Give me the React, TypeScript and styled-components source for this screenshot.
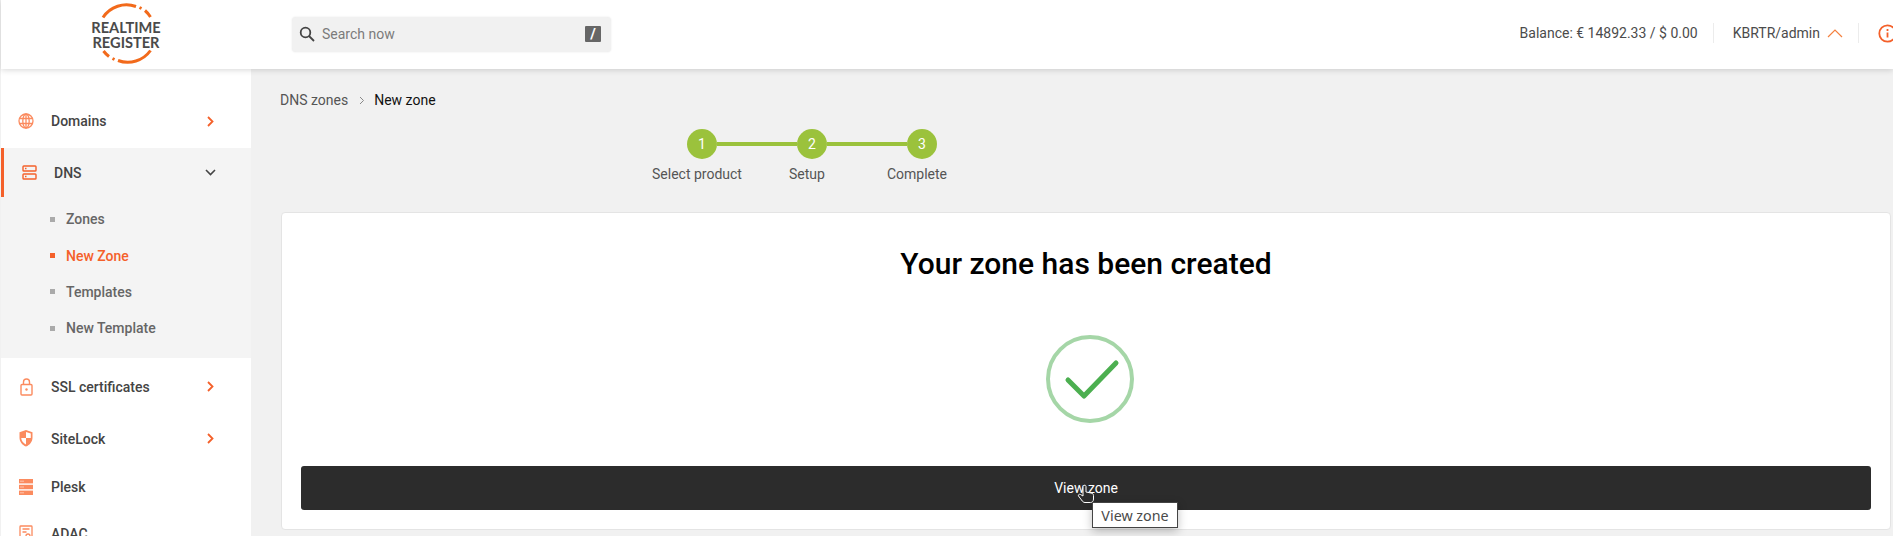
import React from "react";
import styled, { createGlobalStyle } from "styled-components";

const Global = createGlobalStyle`
  html, body { margin: 0; padding: 0; background: #f1f1f1; overflow: hidden; }
  body { font-family: Roboto, "Liberation Sans", sans-serif; font-size: 14px; color: #444; }
  * { box-sizing: border-box; }
`;

const Page = styled.div`
  width: 1893px;
  height: 536px;
  overflow: hidden;
  display: flex;
  flex-direction: column;
  background: #f1f1f1;
`;

const Header = styled.header`
  position: relative;
  z-index: 2;
  flex: none;
  height: 69px;
  margin-left: 1px;
  background: #fff;
  box-shadow: 0 1px 6px rgba(0, 0, 0, 0.16);
  display: flex;
  align-items: center;
  overflow: hidden;
`;

const LogoBox = styled.div`
  flex: none;
  width: 250px;
  height: 69px;
  position: relative;
  display: flex;
  flex-direction: column;
  align-items: center;
  justify-content: center;
`;

const LogoRing = styled.svg`
  position: absolute;
  left: 0;
  top: 0;
`;

const LogoLine = styled.span`
  font-family: Lato, "Liberation Sans", sans-serif;
  font-weight: 700;
  font-size: 14.6px;
  line-height: 15px;
  color: #4a4a4a;
  letter-spacing: 0;
  position: relative;
`;

const Search = styled.div`
  flex: none;
  width: 319px;
  height: 35px;
  margin-left: 41px;
  background: #f1f1f1;
  border-radius: 4px;
  box-shadow: 0 0 2px rgba(0, 0, 0, 0.1);
  display: flex;
  align-items: center;
  padding: 0 10px 1px 7px;
  color: #444;
`;

const SearchText = styled.span`
  flex: 1;
  margin-left: 7px;
  font-size: 14px;
  color: #7b7b7b;
`;

const KeyHint = styled.span`
  width: 16px;
  height: 16px;
  background: #666;
  color: #fff;
  font-size: 15px;
  font-weight: 700;
  display: flex;
  align-items: center;
  justify-content: center;
  border-radius: 1px;
`;

const HeaderRight = styled.div`
  margin-left: auto;
  margin-right: -4px;
  display: flex;
  align-items: center;
  font-size: 14px;
  color: #4b4b4b;
  margin-top: -3px;
`;

const Divider = styled.span`
  width: 1px;
  height: 20px;
  background: #ececec;
  margin: 0 19px 0 15px;
`;

const Account = styled.span`
  display: flex;
  align-items: center;
  gap: 7px;
`;

const Body = styled.div`
  flex: 1;
  display: flex;
  min-height: 0;
  padding-left: 1px;
`;

const Sidebar = styled.nav`
  flex: none;
  width: 250px;
  background: #fff;
  padding-top: 27px;
`;

const NavRow = styled.div<{ $h: number; $pb?: number }>`
  height: ${(p) => p.$h}px;
  padding-bottom: ${(p) => p.$pb ?? 0}px;
  display: flex;
  align-items: center;
  padding-left: 17px;
  font-weight: 500;
  font-size: 14px;
  color: #444;
`;

const NavIconBox = styled.span`
  flex: none;
  width: 16px;
  height: 18px;
  margin-right: 17px;
  display: flex;
  align-items: center;
  justify-content: center;
  color: #fb8b5f;
`;

const NavLabel = styled.span`
  flex: 1;
`;

const NavChevron = styled.svg`
  flex: none;
  margin-right: 37px;
  color: #f4602a;
`;

const OpenGroup = styled.div`
  background: #f4f4f4;
  padding-bottom: 11.4px;
`;

const OpenHead = styled.div`
  height: 49px;
  border-left: 3px solid #f4602a;
  display: flex;
  align-items: center;
  padding-left: 18px;
  font-weight: 500;
  font-size: 14px;
  color: #444;
`;

const DnsIconBox = styled.span`
  flex: none;
  width: 15px;
  margin-right: 17px;
  display: flex;
  color: #f4602a;
`;

const DownChevron = styled.svg`
  flex: none;
  margin-right: 35px;
  color: #444;
`;

const SubList = styled.div`
  padding-top: 4px;
`;

const SubItem = styled.div<{ $active?: boolean }>`
  height: 36.4px;
  display: flex;
  align-items: center;
  padding-left: 49px;
  font-weight: 500;
  font-size: 14px;
  color: ${(p) => (p.$active ? "#f4602a" : "#666")};

  &::before {
    content: "";
    width: 5px;
    height: 5px;
    margin-right: 11px;
    background: ${(p) => (p.$active ? "#f4602a" : "#aaa")};
  }
`;

const Main = styled.main`
  flex: 1;
  min-width: 0;
  padding: 0 2px 0 29px;
  display: flex;
  flex-direction: column;
`;

const Crumbs = styled.div`
  height: 16px;
  margin-top: 23px;
  display: flex;
  align-items: center;
  font-size: 14px;
  color: #555;
`;

const CrumbSep = styled.svg`
  margin: 0 9px 0 11px;
  color: #888;
`;

const CrumbNow = styled.span`
  color: #111;
`;

const Stepper = styled.div`
  margin-top: 21px;
  height: 83px;
  display: flex;
  flex-direction: column;
`;

const Track = styled.div`
  margin-left: 407px;
  display: flex;
  align-items: center;
`;

const StepDot = styled.span`
  flex: none;
  width: 30px;
  height: 30px;
  border-radius: 50%;
  background: #9bc23c;
  color: #fff;
  font-size: 14px;
  display: flex;
  align-items: center;
  justify-content: center;
`;

const Connector = styled.span`
  flex: none;
  width: 80px;
  height: 4px;
  background: #9bc23c;
`;

const Labels = styled.div`
  margin-left: 362px;
  margin-top: 7px;
  display: flex;
`;

const StepLabel = styled.span`
  flex: none;
  width: 110px;
  text-align: center;
  font-size: 14px;
  line-height: 16px;
  color: #555;
`;

const Card = styled.section`
  flex: none;
  height: 318px;
  margin-left: 1px;
  background: #fff;
  border: 1px solid #e4e4e4;
  border-radius: 4px;
  padding: 0 19px;
  display: flex;
  flex-direction: column;
  align-items: center;
`;

const Title = styled.h1`
  margin: 33px 0 0;
  font-size: 30px;
  line-height: 36px;
  font-weight: 500;
  color: #000;
`;

const CheckSvg = styled.svg`
  margin: 53px 0 0 8px;
  flex: none;
`;

const ViewButton = styled.div`
  position: relative;
  margin-top: 43px;
  width: 100%;
  height: 44px;
  background: #2c2c2c;
  border-radius: 3px;
  color: #fff;
  font-size: 14px;
  display: flex;
  align-items: center;
  justify-content: center;
`;

const HandCursor = styled.svg`
  position: absolute;
  left: 776px;
  top: 18px;
`;

const Tooltip = styled.div`
  position: absolute;
  left: 791px;
  top: 36px;
  z-index: 3;
  width: 86px;
  height: 26px;
  background: #fff;
  border: 1px solid #444;
  box-shadow: 0 3px 10px rgba(0, 0, 0, 0.25);
  color: #4a4a4a;
  font-family: "Noto Sans", "Open Sans", sans-serif;
  font-size: 14.3px;
  display: flex;
  align-items: center;
  justify-content: center;
`;

const Chevron = () => (
  <NavChevron width="7" height="11" viewBox="0 0 7 11" fill="none" stroke="currentColor" strokeWidth="1.8">
    <path d="M1 1l4.5 4.5L1 10" />
  </NavChevron>
);

const GlobeIcon = () => (
  <svg width="16" height="16" viewBox="0 0 16 16" fill="none" stroke="currentColor" strokeWidth="1.3">
    <circle cx="8" cy="8" r="7" />
    <ellipse cx="8" cy="8" rx="3.2" ry="7" />
    <path d="M8 1v14M1.5 5.5h13M1.5 10.5h13" />
  </svg>
);

const ServerOutlineIcon = () => (
  <svg width="15" height="15" viewBox="0 0 15 15" fill="none" stroke="currentColor" strokeWidth="1.4">
    <rect x="1" y="1" width="13" height="5" rx="0.8" />
    <rect x="1" y="9" width="13" height="5" rx="0.8" />
    <path d="M3 3.5h1.5M3 11.5h1.5" />
  </svg>
);

const LockIcon = () => (
  <svg width="13" height="18" viewBox="0 0 13 18" fill="none" stroke="currentColor" strokeWidth="1.4">
    <rect x="1" y="6.5" width="11" height="10.5" rx="1" />
    <path d="M3.5 6.5V4a3 3 0 0 1 6 0v2.5" />
    <circle cx="6.5" cy="11.5" r="1.2" fill="currentColor" stroke="none" />
  </svg>
);

const ShieldIcon = () => (
  <svg width="14" height="17" viewBox="0 0 14 17" fill="currentColor">
    <path d="M7 0l6.5 2.3v5.2c0 4.2-2.7 7.6-6.5 9-3.800-1.400-6.500-4.800-6.500-9V2.300zM7 2v6H2.200c.2 2.800 2 5.300 4.800 6.500V8h4.800V3.400z" fillRule="evenodd" />
  </svg>
);

const StackIcon = () => (
  <svg width="14" height="16" viewBox="0 0 14 16">
    <rect x="0" y="0" width="14" height="4.400" fill="currentColor" />
    <rect x="0" y="5.800" width="14" height="4.400" fill="currentColor" />
    <rect x="0" y="11.600" width="14" height="4.400" fill="currentColor" />
    <path d="M1.500 2.200h3M1.500 8h3M1.500 13.800h3" stroke="#fff" strokeWidth="1" strokeDasharray="1 1" />
  </svg>
);

const DocIcon = () => (
  <svg width="14" height="17" viewBox="0 0 14 17" fill="none" stroke="currentColor" strokeWidth="1.3">
    <rect x="1" y="1" width="12" height="15" rx="0.8" />
    <path d="M3.500 4h7M3.500 7h4" />
    <circle cx="9" cy="11" r="2" />
  </svg>
);

const subItems = [
  { label: "Zones" },
  { label: "New Zone", active: true },
  { label: "Templates" },
  { label: "New Template" },
];

export default function App() {
  return (
    <>
      <Global />
      <Page>
        <Header>
          <LogoBox>
            <LogoRing width="250" height="69" viewBox="0 0 250 69" fill="none" stroke="#f26a1b" strokeWidth="3">
              <path d="M102 17.500A28 28 0 0 1 135 6.500" />
              <path d="M138.500 7.500l2 1" />
              <path d="M144 10.500A28 28 0 0 1 149.500 17" />
              <path d="M149.500 50.500A28 28 0 0 1 117 60.500" />
              <path d="M113.500 59.500l-2-1" />
              <path d="M108 56.500A28 28 0 0 1 102.500 51" />
            </LogoRing>
            <LogoLine>REALTIME</LogoLine>
            <LogoLine>REGISTER</LogoLine>
          </LogoBox>
          <Search>
            <svg width="16" height="16" viewBox="0 0 16 16" fill="none" stroke="currentColor" strokeWidth="1.8">
              <circle cx="6.500" cy="6.500" r="4.800" />
              <path d="M10 10l5 5" />
            </svg>
            <SearchText>Search now</SearchText>
            <KeyHint>/</KeyHint>
          </Search>
          <HeaderRight>
            <span>Balance: € 14892.33 / $ 0.00</span>
            <Divider />
            <Account>
              KBRTR/admin
              <svg width="16" height="9" viewBox="0 0 16 9" fill="none" stroke="#f4813f" strokeWidth="1.200">
                <path d="M1 8l7-7 7 7" />
              </svg>
            </Account>
            <Divider />
            <svg width="19" height="19" viewBox="0 0 19 19" fill="none" stroke="#f4602a" strokeWidth="1.800">
              <circle cx="9.500" cy="9.500" r="8.200" />
              <path d="M9.500 8.500v5M9.500 5v2" />
            </svg>
          </HeaderRight>
        </Header>
        <Body>
          <Sidebar>
            <NavRow $h={52} $pb={2}>
              <NavIconBox><GlobeIcon /></NavIconBox>
              <NavLabel>Domains</NavLabel>
              <Chevron />
            </NavRow>
            <OpenGroup>
              <OpenHead>
                <DnsIconBox><ServerOutlineIcon /></DnsIconBox>
                <NavLabel>DNS</NavLabel>
                <DownChevron width="11" height="7" viewBox="0 0 11 7" fill="none" stroke="currentColor" strokeWidth="1.600">
                  <path d="M1 1l4.500 4.500L10 1" />
                </DownChevron>
              </OpenHead>
              <SubList>
                {subItems.map((s) => (
                  <SubItem key={s.label} $active={s.active}>{s.label}</SubItem>
                ))}
              </SubList>
            </OpenGroup>
            <NavRow $h={58}>
              <NavIconBox><LockIcon /></NavIconBox>
              <NavLabel>SSL certificates</NavLabel>
              <Chevron />
            </NavRow>
            <NavRow $h={46}>
              <NavIconBox><ShieldIcon /></NavIconBox>
              <NavLabel>SiteLock</NavLabel>
              <Chevron />
            </NavRow>
            <NavRow $h={50}>
              <NavIconBox><StackIcon /></NavIconBox>
              <NavLabel>Plesk</NavLabel>
            </NavRow>
            <NavRow $h={44}>
              <NavIconBox><DocIcon /></NavIconBox>
              <NavLabel>ADAC</NavLabel>
            </NavRow>
          </Sidebar>
          <Main>
            <Crumbs>
              DNS zones
              <CrumbSep width="6" height="9" viewBox="0 0 6 9" fill="none" stroke="currentColor" strokeWidth="1">
                <path d="M1 1l3.500 3.500L1 8" />
              </CrumbSep>
              <CrumbNow>New zone</CrumbNow>
            </Crumbs>
            <Stepper>
              <Track>
                <StepDot>1</StepDot>
                <Connector />
                <StepDot>2</StepDot>
                <Connector />
                <StepDot>3</StepDot>
              </Track>
              <Labels>
                <StepLabel>Select product</StepLabel>
                <StepLabel>Setup</StepLabel>
                <StepLabel>Complete</StepLabel>
              </Labels>
            </Stepper>
            <Card>
              <Title>Your zone has been created</Title>
              <CheckSvg width="88" height="88" viewBox="0 0 88 88" fill="none">
                <circle cx="44" cy="44" r="42" stroke="#a5d6a7" strokeWidth="4" />
                <path d="M22 45l16 16 32-33" stroke="#4caf50" strokeWidth="5" strokeLinecap="round" strokeLinejoin="round" />
              </CheckSvg>
              <ViewButton>
                View zone
                <HandCursor width="18" height="19" viewBox="0 0 18 19" fill="#2c2c2c" stroke="#fff" strokeWidth="1">
                  <path d="M7 1.500c1-.8 2 0 2 1V8l5 1c1.500.3 2.500 1 2.500 2.500V15c0 2-1 3.500-3 3.500H8c-1.500 0-2.500-1-3.500-2.500L1.500 12c-.6-1 .6-2.300 2-1.500L6 12V2.500z" />
                </HandCursor>
                <Tooltip>View zone</Tooltip>
              </ViewButton>
            </Card>
          </Main>
        </Body>
      </Page>
    </>
  );
}
